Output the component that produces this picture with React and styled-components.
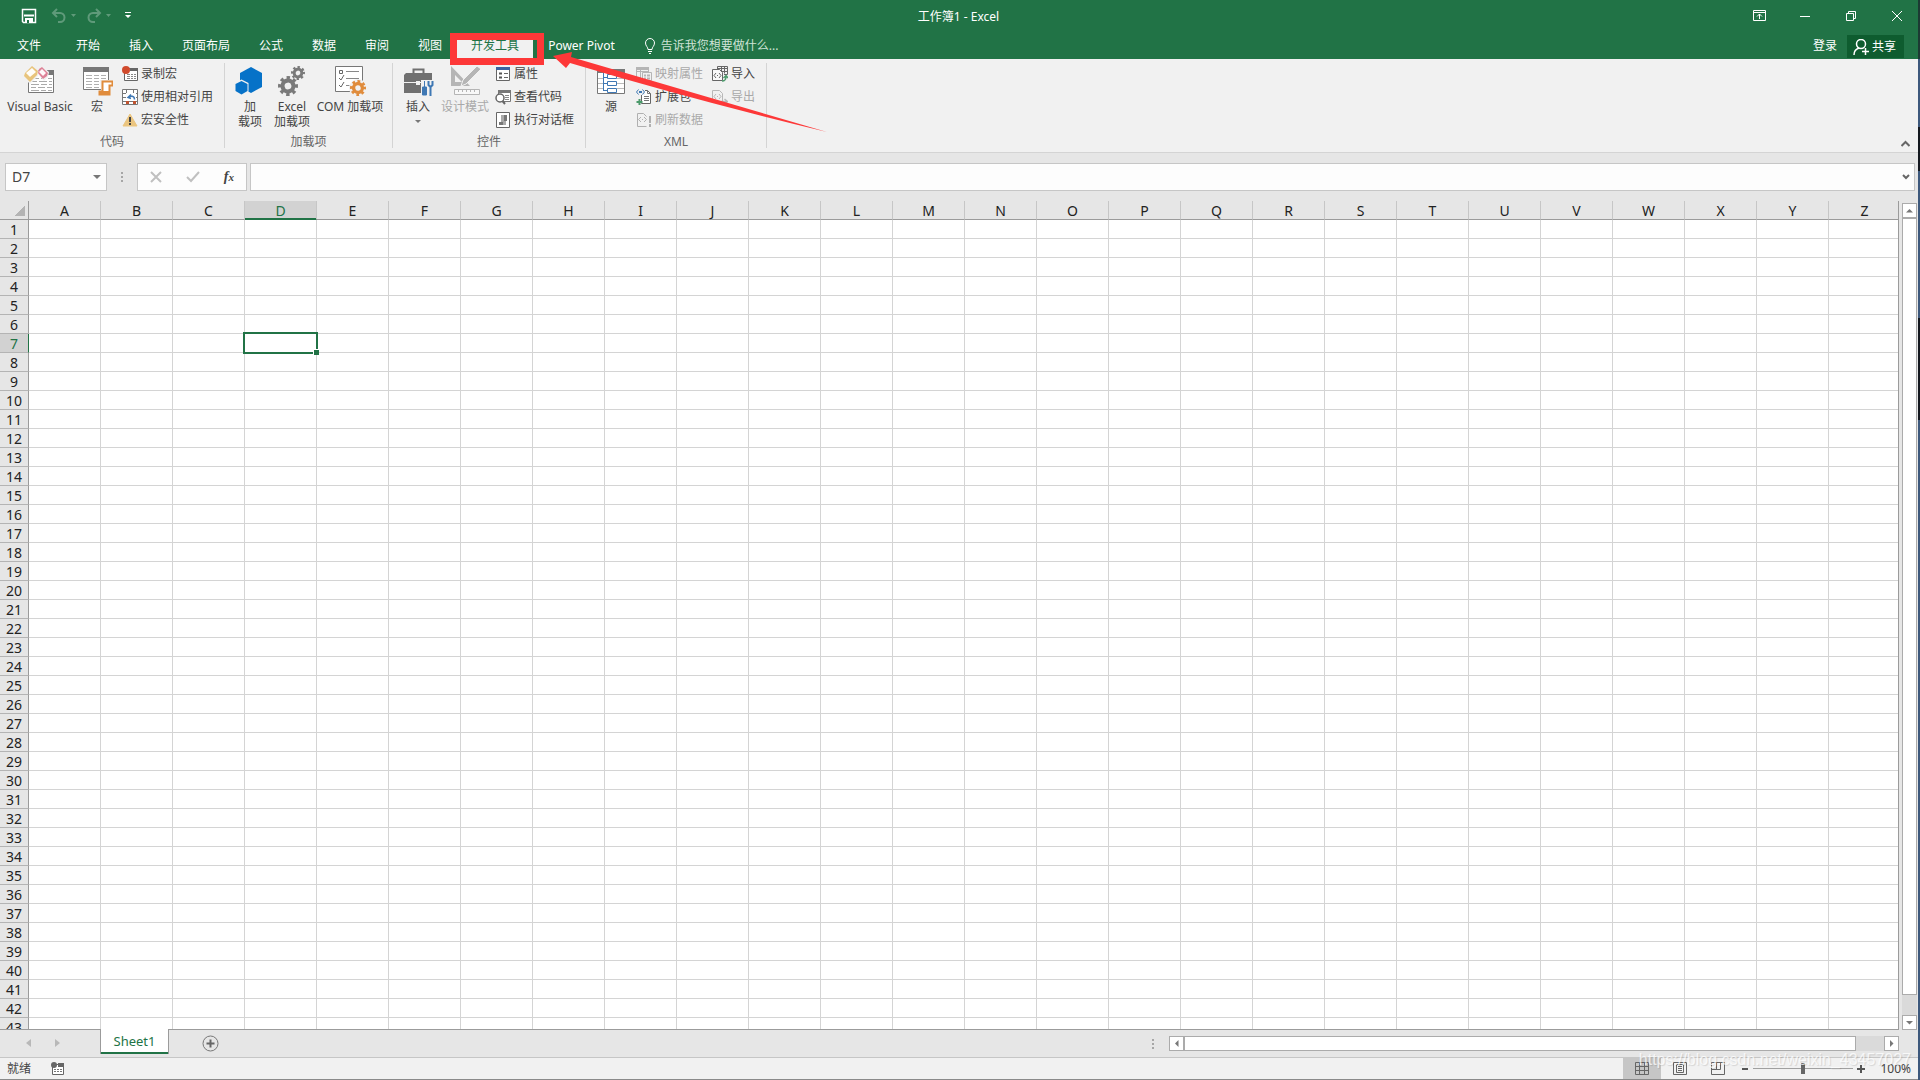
import React from 'react'
import styled, { createGlobalStyle, ThemeProvider } from 'styled-components'

const theme = {
  colorGreen: '#217346',
  colorGreenDark: '#0e5c2f',
  colorRibbon: '#f1f1f1',
  colorChrome: '#e6e6e6',
  colorLine: '#d4d4d4',
  colorBorder: '#c6c6c6',
  colorEdge: '#9b9b9b',
  colorText: '#444444',
  colorMuted: '#666666',
  colorDisabled: '#a9a9a9',
  colorIcon: '#777777',
  colorMark: '#fd3838',
}

const COLUMNS = 'ABCDEFGHIJKLMNOPQRSTUVWXYZ'.split('')
const ROWS = Array.from({ length: 43 }, (_, index) => index + 1)
const TABS = ['开始', '插入', '页面布局', '公式', '数据', '审阅', '视图', '开发工具', 'Power Pivot']
const ACTIVE_TAB = '开发工具'
const ACTIVE_COLUMN = 'D'
const ACTIVE_ROW = 7

const GlobalStyle = createGlobalStyle`
  *,
  *::after {
    box-sizing: border-box;
  }

  body {
    margin: 0;
    overflow: hidden;
    font: 12px/16px 'Noto Sans', 'Noto Sans CJK SC', sans-serif;
  }

  button,
  input {
    margin: 0;
    padding: 0;
    border: 0;
    background: none;
    color: inherit;
    font: inherit;
  }

  svg {
    display: block;
    flex: none;
  }
`

const Window = styled.div`
  position: relative;
  display: flex;
  flex-direction: column;
  height: 100vh;
  background: ${({ theme }) => theme.colorChrome};
  color: ${({ theme }) => theme.colorText};
`

/* sliver of the desktop behind the window */
const DesktopEdge = styled.div`
  position: absolute;
  top: 0;
  right: 0;
  bottom: 0;
  width: 2px;
  background: linear-gradient(#1c3a33 0 59px, #3d587c 59px 127px, #14181f 127px 171px, #3d587c 171px 318px, #14181f 318px 420px, #3d587c 420px);
`

const TitleBar = styled.header`
  display: grid;
  grid-template-columns: 1fr auto 1fr;
  align-items: center;
  height: 31px;
  background: ${({ theme }) => theme.colorGreen};
  color: #fff;
`

const Title = styled.span`
  padding: 2px 3px 0 0;
`

const QuickAccess = styled.div`
  display: flex;
  align-items: center;
  padding-left: 21px;
`

const QuickButton = styled.button`
  display: flex;
  align-items: center;
  gap: 4px;
  width: ${({ $width }) => $width || 35}px;
  color: #fff;
  opacity: ${({ disabled }) => (disabled ? 0.28 : 1)};
`

const WindowButtons = styled.div`
  display: flex;
  justify-content: flex-end;
`

const WindowButton = styled.button`
  display: flex;
  align-items: center;
  justify-content: center;
  width: 46px;
  height: 31px;
`

const TabBar = styled.nav`
  display: flex;
  align-items: stretch;
  height: 28px;
  padding-top: 4px;
  background: ${({ theme }) => theme.colorGreen};
  color: #fff;
`

const Tab = styled.button`
  margin-right: 1px;
  padding: 0 14px 2px;
  background: ${({ $active, theme }) => ($active ? theme.colorRibbon : 'transparent')};
  color: ${({ $active, theme }) => ($active ? theme.colorGreen : '#fff')};
`

const FileTab = styled(Tab)`
  width: 58px;
  margin-right: 4px;
`

const TellMe = styled.button`
  display: flex;
  align-items: flex-start;
  gap: 5px;
  padding: 3px 14px 0;
  color: #cfe3d7;
`

const Account = styled.div`
  display: flex;
  margin-left: auto;
  padding-right: 16px;
`

const SignIn = styled.button`
  padding: 0 10px 2px;
`

const Share = styled.button`
  display: flex;
  align-items: center;
  gap: 3px;
  height: 23px;
  padding: 0 8px 0 6px;
  background: ${({ theme }) => theme.colorGreenDark};
`

const Ribbon = styled.section`
  display: flex;
  height: 94px;
  padding: 4px 0;
  border-bottom: 1px solid ${({ theme }) => theme.colorLine};
  background: ${({ theme }) => theme.colorRibbon};
`

const Group = styled.div`
  display: flex;
  flex-direction: column;
  justify-content: space-between;
  width: ${({ $width }) => $width}px;
  padding: 0 4px;
  border-right: 1px solid ${({ theme }) => theme.colorLine};
`

const GroupTools = styled.div`
  display: flex;
`

const GroupTitle = styled.div`
  line-height: 12px;
  text-align: center;
  color: ${({ theme }) => theme.colorMuted};
`

const BigButton = styled.button`
  display: flex;
  flex-direction: column;
  align-items: center;
  width: ${({ $width }) => $width || 42}px;
  height: 69px;
  padding-top: 2px;
  line-height: 15px;
  white-space: nowrap;
  color: ${({ disabled, theme }) => (disabled ? theme.colorDisabled : theme.colorText)};

  svg {
    margin-bottom: 2px;
  }
`

const DropArrow = styled.span`
  margin-top: 6px;
  border: 3px solid transparent;
  border-top-color: ${({ theme }) => theme.colorIcon};
  border-bottom: 0;
`

const SmallColumn = styled.div`
  display: flex;
  flex-direction: column;
  margin-left: ${({ $gap }) => $gap || 4}px;
`

const SmallButton = styled.button`
  display: flex;
  align-items: center;
  gap: 3px;
  height: 23px;
  padding-bottom: 1px;
  white-space: nowrap;
  color: ${({ disabled, theme }) => (disabled ? theme.colorDisabled : theme.colorText)};
`

const CollapseButton = styled.button`
  align-self: flex-end;
  margin-left: auto;
  padding: 0 10px 0 0;
`

const FormulaRow = styled.div`
  display: flex;
  align-items: center;
  height: 48px;
  padding: 0 5px;
`

const Box = styled.div`
  display: flex;
  align-items: center;
  height: 28px;
  border: 1px solid ${({ theme }) => theme.colorBorder};
  background: #fdfdfd;
`

const NameBox = styled(Box)`
  width: 102px;
  padding: 0 5px 0 6px;
  font-size: 14px;

  input {
    flex: 1;
    min-width: 0;
  }
`

const Triangle = styled.span`
  border: 4px solid transparent;
  border-top-color: ${({ theme }) => theme.colorIcon};
  border-bottom: 0;
`

const Grip = styled.span`
  width: 2px;
  height: 10px;
  margin: 0 ${({ $gap }) => $gap}px;
  background: repeating-linear-gradient(#a6a6a6 0 2px, transparent 2px 4px);
`

const FormulaButtons = styled(Box)`
  justify-content: space-around;
  width: 110px;
  margin-right: 3px;
`

const FxButton = styled.button`
  font: italic bold 14px/16px 'Liberation Serif', serif;

  small {
    font-size: 11px;
  }
`

const FormulaBox = styled(Box)`
  flex: 1;
  padding: 0 4px 0 6px;

  input {
    flex: 1;
  }
`

const Workspace = styled.main`
  display: flex;
  flex: 1;
  min-height: 0;
`

const SheetArea = styled.div`
  flex: 1;
  min-width: 0;
  overflow: hidden;
  border: solid ${({ theme }) => theme.colorEdge};
  border-width: 0 1px 1px 0;
  background: #fff;
`

const Sheet = styled.table`
  table-layout: fixed;
  width: 1901px;
  border-spacing: 0;
  color: #222;
  font-size: 14px;
  line-height: 16px;

  td,
  th {
    height: 19px;
    padding: 2px 0 0;
    font-weight: normal;
  }
`

const Corner = styled.th`
  width: 29px;
  border-right: 1px solid ${({ theme }) => theme.colorEdge};
  border-bottom: 1px solid ${({ theme }) => theme.colorEdge};
  background: linear-gradient(135deg, ${({ theme }) => theme.colorChrome} 50%, #b4b4b4 50%) 14px 4px / 11px 11px no-repeat
    ${({ theme }) => theme.colorChrome};
`

const ColumnHead = styled.th`
  width: 72px;
  border-right: 1px solid ${({ theme }) => theme.colorBorder};
  border-bottom: 1px solid ${({ $active, theme }) => ($active ? theme.colorGreen : theme.colorEdge)};
  box-shadow: ${({ $active, theme }) => ($active ? `inset 0 -1px ${theme.colorGreen}` : 'none')};
  background: ${({ $active, theme }) => ($active ? '#d2d2d2' : theme.colorChrome)};
  color: ${({ $active, theme }) => ($active ? theme.colorGreen : 'inherit')};
`

const RowHead = styled.th`
  border-right: 1px solid ${({ $active, theme }) => ($active ? theme.colorGreen : theme.colorEdge)};
  border-bottom: 1px solid #b4b4b4;
  background: ${({ $active, theme }) => ($active ? '#d2d2d2' : theme.colorChrome)};
  color: ${({ $active, theme }) => ($active ? theme.colorGreen : 'inherit')};
`

const Cell = styled.td`
  position: relative;
  border-right: 1px solid ${({ theme }) => theme.colorLine};
  border-bottom: 1px solid ${({ theme }) => theme.colorLine};
`

const Selection = styled.div`
  position: absolute;
  z-index: 1;
  inset: -2px;
  border: 2px solid ${({ theme }) => theme.colorGreen};

  &::after {
    content: '';
    position: absolute;
    right: -3px;
    bottom: -3px;
    width: 6px;
    height: 6px;
    border: solid #fff;
    border-width: 1px 0 0 1px;
    background: ${({ theme }) => theme.colorGreen};
  }
`

const VerticalScroll = styled.div`
  display: flex;
  flex-direction: column;
  width: 15px;
  margin: 2px 3px 0;
  background: #dadada;
`

const ScrollButton = styled.button`
  display: flex;
  flex: none;
  align-items: center;
  justify-content: center;
  width: 15px;
  height: 15px;
  border: 1px solid #ababab;
  background: #fff;
`

const VerticalThumb = styled.div`
  flex: 1;
  margin-bottom: 20px;
  border: 1px solid #ababab;
  background: #fff;
`

const SheetBar = styled.div`
  display: flex;
  height: 28px;
  border-bottom: 1px solid ${({ theme }) => theme.colorBorder};
`

const SheetNav = styled.div`
  display: flex;
  align-items: center;
  gap: 24px;
  width: 100px;
  padding: 0 0 2px 26px;
`

const SheetTab = styled.button`
  width: 69px;
  height: 25px;
  margin-top: -1px;
  padding-bottom: 2px;
  border: solid ${({ theme }) => theme.colorEdge};
  border-width: 0 1px;
  background: #fff;
  box-shadow: inset 0 -2px ${({ theme }) => theme.colorGreen};
  color: ${({ theme }) => theme.colorGreen};
  font-size: 13px;
`

const AddSheet = styled.button`
  margin: 0 33px;
`

const HorizontalScroll = styled.div`
  display: flex;
  align-items: center;
  gap: 15px;
  width: 768px;
  margin-left: auto;
  padding-right: 21px;
`

const HorizontalTrack = styled.div`
  display: flex;
  flex: 1;
  height: 15px;
  background: #dadada;
`

const HorizontalThumb = styled.div`
  flex: 1;
  margin-right: 28px;
  border: 1px solid #ababab;
  background: #fff;
`

const StatusBar = styled.footer`
  display: flex;
  align-items: center;
  height: 22px;
  padding: 0 9px 0 7px;
  border-bottom: 1px solid #8a8a8a;
  background: ${({ theme }) => theme.colorRibbon};
`

const MacroButton = styled.button`
  margin-left: 20px;
`

const Views = styled.div`
  display: flex;
  align-self: stretch;
  margin-left: auto;
`

const ViewButton = styled.button`
  display: flex;
  align-items: center;
  justify-content: center;
  width: 38px;
  background: ${({ $active, theme }) => ($active ? theme.colorBorder : 'transparent')};
`

const ZoomBox = styled.div`
  display: flex;
  align-items: center;
  padding-left: 4px;
`

const ZoomButton = styled.button`
  display: flex;
  width: 8px;
`

const ZoomRange = styled.input`
  appearance: none;
  width: 100px;
  height: 12px;
  margin: 0 4px;
  background: linear-gradient(#a0a0a0, #a0a0a0) center / 100% 1px no-repeat;

  &::-webkit-slider-thumb {
    appearance: none;
    width: 4px;
    height: 11px;
    background: #666;
  }
`

const ZoomValue = styled.button`
  width: 46px;
  text-align: right;
`

const Watermark = styled.div`
  position: absolute;
  right: 9px;
  bottom: 11px;
  color: rgba(255, 255, 255, 0.75);
  font: 16px/18px 'Liberation Sans', sans-serif;
  text-shadow: 1px 1px 1px rgba(0, 0, 0, 0.12);
  pointer-events: none;
`

const Annotation = styled.svg`
  position: absolute;
  top: 33px;
  left: 450px;
  pointer-events: none;
`

const Icon = ({ size = 16, height, children }) => (
  <svg width={size} height={height || size} viewBox={`0 0 ${size} ${height || size}`} fill="none" aria-hidden="true">
    {children}
  </svg>
)

const Gear = ({ x, y, r, color }) => {
  const tooth = (2 * Math.PI * (r - 2)) / 16

  return (
    <g stroke={color} transform={`rotate(-11 ${x} ${y})`}>
      <circle cx={x} cy={y} r={r - 2} strokeWidth="4" strokeDasharray={`${tooth} ${tooth}`} />
      <circle cx={x} cy={y} r={r * 0.55} strokeWidth={r * 0.42} />
    </g>
  )
}

const VisualBasicIcon = () => (
  <Icon size={32}>
    <path d="M4.500 5.500h25v22h-25z" fill="#fff" stroke="#777" />
    <path d="M22 5h8v5h-8z" fill="#777" />
    <path d="M7 13.500h8m2 0h5m2 0h4M7 16.500h6m2 0h8m2 0h3M7 19.500h8m2 0h6m2 0h3M7 22.500h5m2 0h7m2 0h5M7 25.500h8m2 0h5m2 0h4" stroke="#aaa" />
    <path d="M8 0l7 6-1 5-8 8-7-7 1-5z" fill="#f1f1f1" />
    <path d="M8 1l6 5-1 4-7 7-6-6 1-3z" fill="#e8c47c" />
    <path d="M8 3l4 4-6 5-4-4z" fill="#fffdf8" />
    <path d="M18 1l7 6-1 5-4 4-6-7 1-5z" fill="#f1f1f1" />
    <path d="M18 2l6 6-1 3-4 3-5-6 1-4z" fill="#dd8297" />
    <path d="M18 4l4 4-3 3-4-4z" fill="#fff8fa" />
  </Icon>
)

const MacroIcon = () => (
  <Icon size={32}>
    <path d="M2.500 2.500h25v22h-25z" fill="#fff" stroke="#777" />
    <path d="M2 2h26v5H2z" fill="#777" />
    <path d="M5 10.500h6m2 0h5m2 0h5M5 13.500h6m2 0h5m2 0h5M5 16.500h6m2 0h5M5 19.500h6m2 0h5M5 22.500h6m2 0h5" stroke="#b0b0b0" />
    <path d="M19 15h13v16H17v-6h3z" fill="#f1f1f1" />
    <path d="M21.500 16.500h10v4h-3v9h-10v-3h3z" fill="#fff" stroke="#e08c3c" strokeWidth="2" />
    <path d="M18 26h10v4H18z" fill="#e08c3c" />
  </Icon>
)

const RecordIcon = () => (
  <Icon>
    <path d="M2.500 2.500h13v12h-13z" fill="#fff" stroke="#666" />
    <path d="M8 2h8v3H8z" fill="#666" />
    <path d="M5 8.500h3m1 0h2m1 0h2M5 10.500h3m1 0h2m1 0h2M5 12.500h3m1 0h2m1 0h2" stroke="#888" />
    <circle cx="4" cy="4" r="4" fill="#d04a2c" />
  </Icon>
)

const RelativeIcon = () => (
  <Icon>
    <path d="M.5.5h15v15H.5zM4.500.5v15M11.500.5v15M.5 4.500h15M.5 8.500h15M.5 12.500h15" fill="#fff" stroke="#777" />
    <path d="M4 4h10v8H4z" fill="#fff" />
    <path d="M4 12h3v3H4zM11 12h3v3h-3z" fill="#c0532f" />
    <path d="M12.500 10.500c0-4-4-4-6-2M9 5.500L6 8.500l3 1" stroke="#3f78b4" strokeWidth="1.500" />
  </Icon>
)

const WarningIcon = () => (
  <Icon>
    <path d="M8 2l7 12H1z" fill="#ebc57f" stroke="#ebc57f" strokeLinejoin="round" />
    <path d="M7 5h2v5H7zM7 11h2v2H7z" fill="#444" />
  </Icon>
)

const HexagonIcon = () => (
  <Icon size={32}>
    <path d="M17 2l11 6v14l-11 6-11-6V8z" fill="#0672c8" />
    <path d="M7.500 14.500l7 3.500v8.500l-7 4-7-4V18z" fill="#f1f1f1" />
    <path d="M7.500 16l6 3v7l-6 3.500-6-3.500v-7z" fill="#0672c8" />
  </Icon>
)

const GearsIcon = () => (
  <Icon size={32}>
    <Gear x={12} y={21} r={10} color="#7a7a7a" />
    <Gear x={22} y={8} r={7} color="#7a7a7a" />
  </Icon>
)

const ComIcon = () => (
  <Icon size={32}>
    <path d="M1.500 1.500h27v25h-27z" fill="#fff" stroke="#777" />
    <path d="M5.500 5.500h3v3h-3z" stroke="#666" />
    <path d="M12 6.500h13M12 13.500h13M12 20.500h5" stroke="#888" />
    <path d="M5 13l2 2 3-5M5 20l2 2 3-5" stroke="#666" />
    <circle cx="24" cy="23" r="9" fill="#f1f1f1" />
    <Gear x={24} y={23} r={8} color="#e08c3c" />
  </Icon>
)

const ToolboxIcon = () => (
  <Icon size={32}>
    <path d="M11.500 8V4.500h10V8" stroke="#707070" strokeWidth="2" />
    <path d="M4 8h26v9H2v-7z" fill="#707070" />
    <path d="M2 18h28v10H2z" fill="#707070" />
    <path d="M14 16h4v4h-4z" fill="#f1f1f1" />
    <path d="M19 15h13v17H19z" fill="#f1f1f1" />
    <path d="M22.500 16v6M20.500 22h4v8h-4z" fill="#3f78b4" stroke="#3f78b4" />
    <path d="M26.500 16v4l2 2 2-2v-4M28.500 22v9" stroke="#3f78b4" strokeWidth="2" />
  </Icon>
)

const DesignIcon = () => (
  <Icon size={32}>
    <path d="M2 1l19 20H2zM6 10v7h7z" fill="#b5b5b5" fillRule="evenodd" />
    <path d="M14 15L28 1l4 3-15 15-5 2z" fill="#b5b5b5" stroke="#f1f1f1" />
    <path d="M5.500 24.500h25v5h-25z" fill="#f8f8f8" stroke="#b5b5b5" />
    <path d="M9.500 25v2m4-2v2m4-2v2m4-2v2m4-2v2" stroke="#b5b5b5" />
  </Icon>
)

const PropertiesIcon = () => (
  <Icon>
    <path d="M1.500 1.500h13v13h-13z" fill="#fff" stroke="#666" />
    <path d="M1 1h14v3H1z" fill="#3a62a0" />
    <path d="M4 6.500h3v2H4zM4 10.500h3v2H4z" fill="#555" />
    <path d="M9 7.500h4M9 11.500h4" stroke="#666" />
  </Icon>
)

const ViewCodeIcon = () => (
  <Icon>
    <path d="M3.500 1.500h12v11h-12z" fill="#fff" stroke="#777" />
    <path d="M3 1h13v3H3z" fill="#777" />
    <path d="M10 6.500h4M10 8.500h4M10 10.500h4" stroke="#888" />
    <circle cx="5" cy="9" r="4" fill="#fff" stroke="#666" strokeWidth="1.500" />
    <path d="M7.500 12l2.500 3" stroke="#666" strokeWidth="2" />
  </Icon>
)

const DialogIcon = () => (
  <Icon>
    <path d="M1.500.5h13v15h-13z" fill="#fff" stroke="#666" />
    <path d="M6 3h5v10H6z" fill="#aaa" />
    <path d="M4 10h4v3H4zM9 3h3v6H9z" fill="#777" />
  </Icon>
)

const SourceIcon = () => (
  <Icon size={32}>
    <path d="M2.500 4.500h27v24h-27z" fill="#fff" stroke="#777" />
    <path d="M2 4h28v4H2z" fill="#777" />
    <path d="M3 13.500h5M3 18.500h5M3 23.500h5M22 13.500h7M22 18.500h7M22 23.500h7" stroke="#bbb" />
    <path d="M8.500 8v18M8 12.500h4M8 18.500h4M8 25.500h4" stroke="#3f78b4" />
    <path d="M12.500 9.500h9v4h-9zM12.500 16.500h9v4h-9zM12.500 23.500h9v4h-9z" fill="#fff" stroke="#3f78b4" />
  </Icon>
)

const MapIcon = () => (
  <Icon>
    <path d="M.5 1.500h12v11H.5zM.5 5.500h12M4.500 2v10" stroke="#b5b5b5" />
    <path d="M0 1h13v3H0z" fill="#b5b5b5" />
    <path d="M6.500 6.500h9v8h-9z" fill="#f1f1f1" stroke="#b5b5b5" />
    <path d="M8 9.500h2m1 0h3M8 12.500h2m1 0h3" stroke="#b5b5b5" strokeWidth="2" />
  </Icon>
)

const ExpandIcon = () => (
  <Icon>
    <path d="M5.500 1.500h6l3 3v10h-9z" fill="#fff" stroke="#666" />
    <path d="M11.500 1.500v3h3M8 7.500h5M8 9.500h5M8 11.500h5" stroke="#777" />
    <path d="M0 0h9v6H0z" fill="#f1f1f1" />
    <path d="M2.500.5L.5 3l2 2.500M6.500.5l2 2.500-2 2.500" stroke="#3f78b4" />
    <path d="M3 2h3v2H3z" fill="#3f78b4" />
    <path d="M3.500 10v6M.5 13h6" stroke="#4c9a6b" strokeWidth="2" />
  </Icon>
)

const RefreshIcon = () => (
  <Icon>
    <path d="M10.500 14.500h-9v-13h6l3 3" stroke="#b0b0b0" />
    <path d="M5 5L2.500 7.500 5 10M8 5l2.500 2.500L8 10M6 7.500h1" stroke="#b0b0b0" />
    <path d="M13 4h2v7h-2zM13 12h2v3h-2z" fill="#b0b0b0" />
  </Icon>
)

const ImportIcon = () => (
  <Icon>
    <path d="M5.500 3V.5h10v8H12M5.500 2.500h10M9.500.5v5M12.500.5v7M8 5.500h7" stroke="#666" />
    <path d="M.5 3.500h7l3 3v8H.5z" fill="#f8f8f8" stroke="#666" />
    <path d="M4 7L2 9.500 4 12M7 7l2 2.500L7 12M5 9.500h1" stroke="#666" />
    <path d="M10 15c3 0 4-1 4-5m-2.500 2L14 9.500l2 2.500" stroke="#4c9a6b" strokeWidth="1.500" />
  </Icon>
)

const ExportIcon = () => (
  <Icon>
    <path d="M.5 1.500h7l3 3v9H.5z" stroke="#b8b8b8" />
    <path d="M4 5L2 7.500 4 10M7 5l2 2.500L7 10M5 7.500h1" stroke="#b8b8b8" />
    <path d="M9 12.500h6M12.500 10l3 2.500-3 2.500" stroke="#b8b8b8" strokeWidth="1.500" />
  </Icon>
)

const SaveIcon = () => (
  <Icon>
    <path d="M2 1.500h12.500v13h-12l-1-1v-12z" stroke="#fff" strokeWidth="1.500" />
    <path d="M3 7.500h10" stroke="#fff" strokeWidth="2" />
    <path d="M4 10h8v5H4z" fill="#fff" />
    <path d="M6 12h2v3H6z" fill="#217346" />
  </Icon>
)

const UndoIcon = ({ flip }) => (
  <Icon>
    <path
      d="M6 1L2 5l4 4M2 5h7a4.500 4.500 0 010 9H7"
      stroke="#fff"
      strokeWidth="2"
      transform={flip ? 'translate(16 0) scale(-1 1)' : undefined}
    />
  </Icon>
)

const Caret = () => (
  <Icon size={5} height={3}>
    <path d="M0 0h5L2.500 3z" fill="#fff" />
  </Icon>
)

const CustomizeIcon = () => (
  <Icon size={6} height={7}>
    <path d="M0 0h6v1H0zM0 3h6L3 6z" fill="#fff" />
  </Icon>
)

const BulbIcon = () => (
  <Icon size={12} height={16}>
    <path d="M4 11.500C4 9 1.500 8 1.500 5a4.500 4.500 0 019 0c0 3-2.500 4-2.500 6.500zM4 13.500h4M5 15.500h2" stroke="#fff" />
  </Icon>
)

const PersonIcon = () => (
  <Icon>
    <circle cx="8" cy="5" r="4.500" stroke="#fff" strokeWidth="1.500" />
    <path d="M1 16c0-4 2-6 5-7M12.500 9v7M9 12.500h7" stroke="#fff" strokeWidth="1.500" />
  </Icon>
)

const Arrow = ({ d }) => (
  <Icon size={7} height={7}>
    <path d={d} fill="#777" />
  </Icon>
)

const arrows = {
  up: 'M0 5.500h7L3.500 2z',
  down: 'M0 2h7L3.500 5.500z',
  left: 'M5.500 0v7L2 3.500z',
  right: 'M2 0v7l3.500-3.500z',
}

const TitleSection = () => (
  <TitleBar>
    <QuickAccess>
      <QuickButton $width={30} aria-label="保存"><SaveIcon /></QuickButton>
      <QuickButton disabled aria-label="撤消"><UndoIcon /><Caret /></QuickButton>
      <QuickButton $width={39} disabled aria-label="恢复"><UndoIcon flip /><Caret /></QuickButton>
      <QuickButton $width={10} aria-label="自定义"><CustomizeIcon /></QuickButton>
    </QuickAccess>
    <Title>工作簿1 - Excel</Title>
    <WindowButtons>
      <WindowButton aria-label="功能区显示选项">
        <Icon size={13} height={11}>
          <path d="M.5.5h12v10H.5zM.5 2.500h12M6.500 9V4M4 6.500L6.500 4 9 6.500" stroke="#fff" />
        </Icon>
      </WindowButton>
      <WindowButton aria-label="最小化">
        <Icon size={10}><path d="M0 5.500h10" stroke="#fff" /></Icon>
      </WindowButton>
      <WindowButton aria-label="还原">
        <Icon size={10}><path d="M.5 2.500h7v7h-7zM2.500 2V.5h7v7H8" stroke="#fff" /></Icon>
      </WindowButton>
      <WindowButton aria-label="关闭">
        <Icon size={10}><path d="M0 0l10 10M10 0L0 10" stroke="#fff" /></Icon>
      </WindowButton>
    </WindowButtons>
  </TitleBar>
)

const TabSection = () => (
  <TabBar>
    <FileTab>文件</FileTab>
    {TABS.map(tab => (
      <Tab key={tab} $active={tab === ACTIVE_TAB}>{tab}</Tab>
    ))}
    <TellMe><BulbIcon />告诉我您想要做什么...</TellMe>
    <Account>
      <SignIn>登录</SignIn>
      <Share><PersonIcon />共享</Share>
    </Account>
  </TabBar>
)

const RibbonSection = () => (
  <Ribbon>
    <Group $width={225}>
      <GroupTools>
        <BigButton $width={72}><VisualBasicIcon />Visual Basic</BigButton>
        <BigButton><MacroIcon />宏</BigButton>
        <SmallColumn>
          <SmallButton><RecordIcon />录制宏</SmallButton>
          <SmallButton><RelativeIcon />使用相对引用</SmallButton>
          <SmallButton><WarningIcon />宏安全性</SmallButton>
        </SmallColumn>
      </GroupTools>
      <GroupTitle>代码</GroupTitle>
    </Group>
    <Group $width={168}>
      <GroupTools>
        <BigButton><HexagonIcon />加<br />载项</BigButton>
        <BigButton><GearsIcon />Excel<br />加载项</BigButton>
        <BigButton $width={74}><ComIcon />COM 加载项</BigButton>
      </GroupTools>
      <GroupTitle>加载项</GroupTitle>
    </Group>
    <Group $width={193}>
      <GroupTools>
        <BigButton><ToolboxIcon />插入<DropArrow /></BigButton>
        <BigButton $width={52} disabled><DesignIcon />设计模式</BigButton>
        <SmallColumn>
          <SmallButton><PropertiesIcon />属性</SmallButton>
          <SmallButton><ViewCodeIcon />查看代码</SmallButton>
          <SmallButton><DialogIcon />执行对话框</SmallButton>
        </SmallColumn>
      </GroupTools>
      <GroupTitle>控件</GroupTitle>
    </Group>
    <Group $width={181}>
      <GroupTools>
        <BigButton><SourceIcon />源</BigButton>
        <SmallColumn>
          <SmallButton disabled><MapIcon />映射属性</SmallButton>
          <SmallButton><ExpandIcon />扩展包</SmallButton>
          <SmallButton disabled><RefreshIcon />刷新数据</SmallButton>
        </SmallColumn>
        <SmallColumn $gap={9}>
          <SmallButton><ImportIcon />导入</SmallButton>
          <SmallButton disabled><ExportIcon />导出</SmallButton>
        </SmallColumn>
      </GroupTools>
      <GroupTitle>XML</GroupTitle>
    </Group>
    <CollapseButton aria-label="折叠功能区">
      <Icon size={9} height={8}><path d="M.5 6l4-4 4 4" stroke="#666" strokeWidth="2" /></Icon>
    </CollapseButton>
  </Ribbon>
)

const FormulaSection = () => (
  <FormulaRow>
    <NameBox>
      <input aria-label="名称框" defaultValue="D7" />
      <Triangle />
    </NameBox>
    <Grip $gap={14} />
    <FormulaButtons>
      <button aria-label="取消">
        <Icon size={12}><path d="M1 1l10 10M11 1L1 11" stroke="#c0c0c0" strokeWidth="2" /></Icon>
      </button>
      <button aria-label="输入">
        <Icon size={14} height={12}><path d="M1 6l4 4 8-9" stroke="#c0c0c0" strokeWidth="2" /></Icon>
      </button>
      <FxButton aria-label="插入函数">f<small>x</small></FxButton>
    </FormulaButtons>
    <FormulaBox>
      <input aria-label="编辑栏" />
      <Icon size={8}><path d="M1 2l3 3 3-3" stroke="#666" strokeWidth="2" /></Icon>
    </FormulaBox>
  </FormulaRow>
)

const SheetSection = () => (
  <Workspace>
    <SheetArea>
      <Sheet>
        <thead>
          <tr>
            <Corner />
            {COLUMNS.map(column => (
              <ColumnHead key={column} scope="col" $active={column === ACTIVE_COLUMN}>{column}</ColumnHead>
            ))}
          </tr>
        </thead>
        <tbody>
          {ROWS.map(row => (
            <tr key={row}>
              <RowHead scope="row" $active={row === ACTIVE_ROW}>{row}</RowHead>
              {COLUMNS.map(column => (
                <Cell key={column}>
                  {row === ACTIVE_ROW && column === ACTIVE_COLUMN ? <Selection /> : null}
                </Cell>
              ))}
            </tr>
          ))}
        </tbody>
      </Sheet>
    </SheetArea>
    <VerticalScroll>
      <ScrollButton aria-label="向上滚动"><Arrow d={arrows.up} /></ScrollButton>
      <VerticalThumb />
      <ScrollButton aria-label="向下滚动"><Arrow d={arrows.down} /></ScrollButton>
    </VerticalScroll>
  </Workspace>
)

const SheetBarSection = () => (
  <SheetBar>
    <SheetNav>
      <Icon size={5} height={8}><path d="M5 0v8L0 4z" fill="#b8b8b8" /></Icon>
      <Icon size={5} height={8}><path d="M0 0v8l5-4z" fill="#b8b8b8" /></Icon>
    </SheetNav>
    <SheetTab>Sheet1</SheetTab>
    <AddSheet aria-label="新工作表">
      <Icon size={17}>
        <circle cx="8.500" cy="8.500" r="7.500" stroke="#777" />
        <path d="M8.500 4.500v8M4.500 8.500h8" stroke="#666" strokeWidth="2" />
      </Icon>
    </AddSheet>
    <HorizontalScroll>
      <Grip $gap={0} />
      <HorizontalTrack>
        <ScrollButton aria-label="向左滚动"><Arrow d={arrows.left} /></ScrollButton>
        <HorizontalThumb />
        <ScrollButton aria-label="向右滚动"><Arrow d={arrows.right} /></ScrollButton>
      </HorizontalTrack>
    </HorizontalScroll>
  </SheetBar>
)

const StatusSection = () => (
  <StatusBar>
    就绪
    <MacroButton aria-label="录制宏">
      <Icon size={14}>
        <path d="M1.500 2.500h11v10h-11z" fill="#fff" stroke="#666" />
        <path d="M7 1h6v4H7z" fill="#666" />
        <path d="M3 7.500h2m1 0h2m1 0h2M3 9.500h2m1 0h2m1 0h2" stroke="#777" />
        <circle cx="3" cy="3" r="3" fill="#666" />
      </Icon>
    </MacroButton>
    <Views>
      <ViewButton $active aria-label="普通">
        <Icon size={14} height={13}><path d="M.5.5h13v12H.5zM4.500.5v12M9.500.5v12M.5 4.500h13M.5 8.500h13" stroke="#666" /></Icon>
      </ViewButton>
      <ViewButton aria-label="页面布局">
        <Icon size={14} height={13}><path d="M.5.5h13v12H.5zM3.500 2.500h7v8h-7zM5 4.500h4M5 6.500h4M5 8.500h4" stroke="#666" /></Icon>
      </ViewButton>
      <ViewButton aria-label="分页预览">
        <Icon size={14} height={13}><path d="M.5.5h13v12H.5zM5.500.5v7M9.500.5v7M.5 7.500h9" stroke="#666" /></Icon>
      </ViewButton>
    </Views>
    <ZoomBox>
      <ZoomButton aria-label="缩小">
        <Icon size={8}><path d="M1 4h6" stroke="#555" strokeWidth="2" /></Icon>
      </ZoomButton>
      <ZoomRange type="range" min="10" max="190" defaultValue="100" aria-label="缩放" />
      <ZoomButton aria-label="放大">
        <Icon size={8}><path d="M0 4h8M4 0v8" stroke="#555" strokeWidth="2" /></Icon>
      </ZoomButton>
      <ZoomValue>100%</ZoomValue>
    </ZoomBox>
  </StatusBar>
)

export default class App extends React.Component {
  render() {
    return (
      <ThemeProvider theme={theme}>
        <GlobalStyle />
        <Window>
          <TitleSection />
          <TabSection />
          <RibbonSection />
          <FormulaSection />
          <SheetSection />
          <SheetBarSection />
          <StatusSection />
          <DesktopEdge />
          <Watermark>https://blog.csdn.net/weixin_43457027</Watermark>
          <Annotation width="380" height="102" viewBox="0 0 380 102" fill="none" aria-hidden="true">
            <path d="M3.500 3.500h87v25h-87z" stroke={theme.colorMark} strokeWidth="7" />
            <path d="M103 23l19-4-1 5 256 75Q240 66 120 30l-4 5z" fill={theme.colorMark} />
          </Annotation>
        </Window>
      </ThemeProvider>
    )
  }
}
